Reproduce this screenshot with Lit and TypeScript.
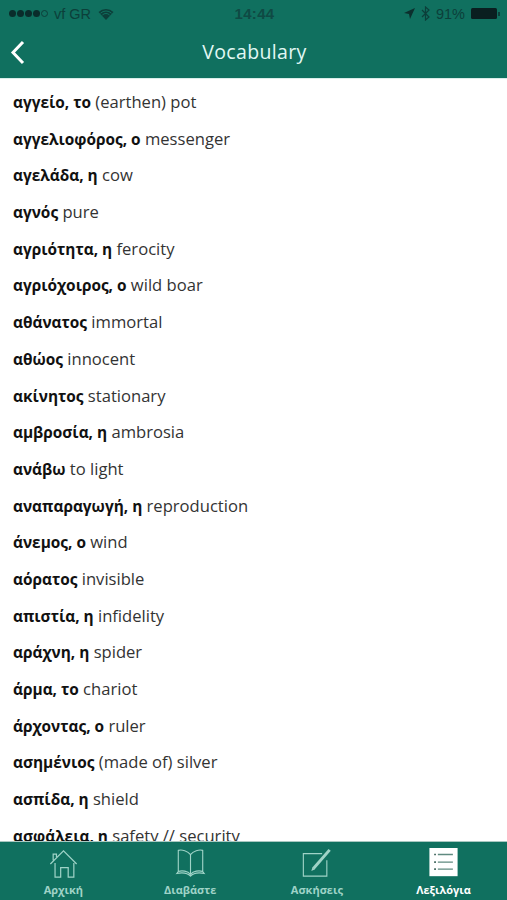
import { LitElement, html, css, svg } from "lit";
import { customElement } from "lit/decorators.js";

const WORDS: [string, string][] = [
  ["αγγείο, το", "(earthen) pot"],
  ["αγγελιοφόρος, ο", "messenger"],
  ["αγελάδα, η", "cow"],
  ["αγνός", "pure"],
  ["αγριότητα, η", "ferocity"],
  ["αγριόχοιρος, ο", "wild boar"],
  ["αθάνατος", "immortal"],
  ["αθώος", "innocent"],
  ["ακίνητος", "stationary"],
  ["αμβροσία, η", "ambrosia"],
  ["ανάβω", "to light"],
  ["αναπαραγωγή, η", "reproduction"],
  ["άνεμος, ο", "wind"],
  ["αόρατος", "invisible"],
  ["απιστία, η", "infidelity"],
  ["αράχνη, η", "spider"],
  ["άρμα, το", "chariot"],
  ["άρχοντας, ο", "ruler"],
  ["ασημένιος", "(made of) silver"],
  ["ασπίδα, η", "shield"],
  ["ασφάλεια, η", "safety // security"],
];

const ICONS = {
  home: svg`<path d="M1 17 L15 3 L29 17 M4 13 V6.5 H7.5 V9.5 M6 16 V31 H12 V21 H20 V31 H26 V16" fill="none" stroke="currentColor" stroke-width="1.3"/>`,
  book: svg`<path d="M15 7 C12 3 6 1.5 2 2.5 V25 C6 23.5 12 24.5 15 28 C18 24.5 24 23.5 28 25 V2.5 C24 1.5 18 3 15 7 Z M15 7 V28 M2 25 L0.5 27 C6 26 12 26.5 15 30 C18 26.5 24 26 29.5 27 L28 25" fill="none" stroke="currentColor" stroke-width="1.2"/>`,
  edit: svg`<path d="M26 13 V30 H1 V6 H21" fill="none" stroke="currentColor" stroke-width="1.2"/><path d="M11.5 22 L29 2" fill="none" stroke="currentColor" stroke-width="3.2"/><path d="M9.5 24.5 L10.5 21 L13 23 Z" fill="currentColor"/>`,
  list: svg`<rect x="0" y="0" width="30" height="30" fill="#fff"/><path d="M9 7 H25 M9 15 H25 M9 22.5 H25" stroke="#5f8a80" stroke-width="1.5"/><path d="M5 7 H7 M5 15 H7 M5 22.5 H7" stroke="#4c6f67" stroke-width="1.7"/>`,
};

@customElement("app-root")
export class AppRoot extends LitElement {
  static styles = css`
    :host {
      display: flex;
      flex-direction: column;
      width: 507px;
      height: 900px;
      overflow: hidden;
      background: #fff;
      font-family: "Open Sans", "Noto Sans", sans-serif;
    }
    .top {
      flex: none;
      height: 78px;
      background: #10705f;
      display: flex;
      flex-direction: column;
    }
    .status {
      height: 27px;
      display: grid;
      grid-template-columns: 1fr auto 1fr;
      align-items: center;
      padding: 0 7px 0 9px;
      color: #0c3f3a;
      font: 14.5px "Liberation Sans", sans-serif;
    }
    .status-left, .status-right {
      display: flex;
      align-items: center;
    }
    .status-right { justify-content: flex-end; gap: 6px; }
    .dots { display: flex; gap: 1px; margin-right: 6px; }
    .dot { width: 7px; height: 7px; border-radius: 50%; background: #0a2c2b; }
    .dot.off { background: none; box-sizing: border-box; border: 1px solid #0c3f3a; }
    .wifi { margin-left: 7px; }
    .time { font-weight: 700; font-size: 15px; letter-spacing: 0.3px; color: #0f4a44; }
    .battery { display: flex; align-items: center; }
    .cell { width: 26px; height: 11px; background: #0a1f20; border-radius: 1.5px; }
    .nib { width: 2px; height: 4px; background: #0c3f3a; margin-left: 1px; }
    .nav {
      flex: 1;
      display: grid;
      grid-template-columns: 1fr auto 1fr;
      align-items: center;
      padding-left: 10px;
      color: #e2f8f4;
    }
    .nav svg { display: block; }
    .title { font-size: 19.5px; letter-spacing: 0.35px; padding-bottom: 2px; margin-right: 8px; }
    .list {
      flex: 1;
      min-height: 0;
      overflow: hidden;
      padding: 5px 13px 0;
      color: #333;
      border-top: 1px solid #d8eeea;
    }
    .row {
      height: 36.7px;
      line-height: 36.7px;
      font-size: 16.6px;
      white-space: nowrap;
    }
    .row b { color: #111; font-weight: 700; font-size: 15.4px; }
    .tabs {
      flex: none;
      height: 59px;
      box-sizing: border-box;
      background: #10705f;
      border-top: 1px solid #a9c8c1;
      display: grid;
      grid-template-columns: repeat(4, 1fr);
    }
    .tab {
      display: flex;
      flex-direction: column;
      align-items: center;
      padding-top: 6px;
      color: #9fd3c7;
      font-size: 11px;
      font-weight: 700;
      gap: 3px;
    }
    .tab.on { color: #fff; }
    .tab svg { display: block; height: 31px; width: 31px; overflow: visible; }
  `;

  render() {
    const tabs = [
      ["Αρχική", ICONS.home, false],
      ["Διαβάστε", ICONS.book, false],
      ["Ασκήσεις", ICONS.edit, false],
      ["Λεξιλόγια", ICONS.list, true],
    ] as const;
    return html`
      <div class="top">
        <div class="status">
          <div class="status-left">
            <span class="dots">
              <i class="dot"></i><i class="dot"></i><i class="dot"></i><i class="dot"></i><i class="dot off"></i>
            </span>
            <span>vf GR</span>
            <svg class="wifi" width="16" height="12" viewBox="0 0 16 12">
              <path d="M8 12 L0.5 4 A11 11 0 0 1 15.5 4 Z M8 12" fill="#0c3f3a"/>
              <path d="M2.5 5.2 A8 8 0 0 1 13.5 5.2 M4.4 7 A5 5 0 0 1 11.6 7" fill="none" stroke="#10705f" stroke-width="1"/>
            </svg>
          </div>
          <div class="time">14:44</div>
          <div class="status-right">
            <svg width="11" height="11" viewBox="0 0 11 11"><path d="M11 0 L0 5 L5 6 L6 11 Z" fill="#0c2f2d"/></svg>
            <svg width="9" height="15" viewBox="0 0 9 15"><path d="M1 4 L8 11 L4.5 14 V1 L8 4 L1 11" fill="none" stroke="#0c3f3a" stroke-width="1.2"/></svg>
            <span>91%</span>
            <div class="battery"><div class="cell"></div><div class="nib"></div></div>
          </div>
        </div>
        <div class="nav">
          <svg width="15" height="25" viewBox="0 0 15 25"><path d="M13 2 L3 12.5 L13 23" fill="none" stroke="#fff" stroke-width="3"/></svg>
          <div class="title">Vocabulary</div>
          <div></div>
        </div>
      </div>
      <div class="list">
        ${WORDS.map(([g, e]) => html`<div class="row"><b>${g}</b> ${e}</div>`)}
      </div>
      <div class="tabs">
        ${tabs.map(
          ([label, icon, on]) => html`<div class="tab ${on ? "on" : ""}">
            <svg viewBox="0 0 30 33">${icon}</svg>
            <span>${label}</span>
          </div>`
        )}
      </div>
    `;
  }
}
